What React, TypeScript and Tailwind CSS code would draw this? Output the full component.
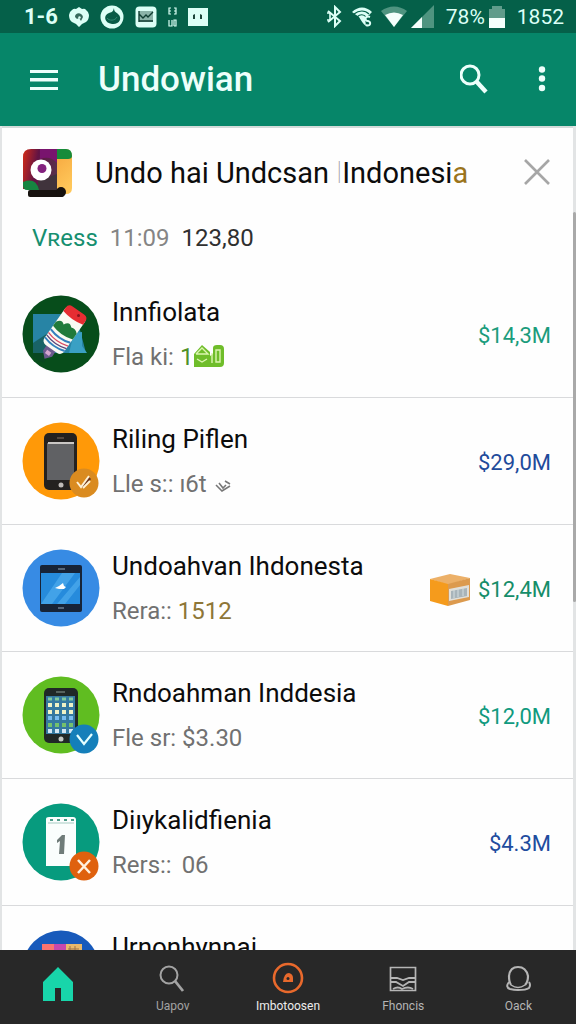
import React from 'react';

interface Item {
  title: string;
  label?: string;
  value?: React.ReactNode;
  amount?: string;
  amountClass?: string;
  icon: React.ReactNode;
  extra?: React.ReactNode;
}

const StatusBar: React.FC = () => (
  <div className="flex h-[33px] shrink-0 items-center justify-between bg-[#056049] pl-6 pr-3 text-[#dcfff6]">
    <div className="flex items-center gap-[11px]">
      <span className="text-[22px] font-bold leading-6">1-6</span>
      <svg className="h-5 w-5" viewBox="0 0 20 20">
        <path d="M3 3q2-2 4-1l3-2 3 2q3-1 4 1 3 2 3 5 0 5-3 7l-4 2-3 3-3-3-4-2Q0 13 0 8q0-3 3-5z" fill="currentColor" />
        <path d="M6 10c0-5 7-5 8 0l-2 4-2-3-2 1z" fill="#376b5d" />
        <circle cx="10.500" cy="10.500" r="1.200" fill="#dcfff6" />
      </svg>
      <svg className="h-6 w-6" viewBox="0 0 24 24">
        <circle cx="12" cy="12" r="11.500" fill="currentColor" />
        <path d="M14 3c-1 3-1 4-5 5-6 2-5 10 3 11 7 1 11-6 6-10-2-2-4-2-4-6z" fill="#075c47" />
        <path d="M7 13c2 3 8 3 10-1" fill="none" stroke="#2f8a73" />
      </svg>
      <svg className="h-[22px] w-[22px]" viewBox="0 0 22 22">
        <rect x="0.500" y="0.500" width="21" height="21" rx="4" fill="currentColor" />
        <rect x="4" y="5" width="14" height="11" fill="#8bb3a8" />
        <path d="m4 8 4 4 3-3 2 2 5-5M4 15h14M4 5v11" fill="none" stroke="#123f33" strokeWidth="1.400" />
      </svg>
      <svg className="h-5 w-[9px]" viewBox="0 0 9 20" fill="none" stroke="currentColor">
        <path d="M3 1H1v6h2M6 1h2v6H6M1 4h2m3 0h2M1 13v6h3v-6m2 6h2v-6H6v6" strokeWidth="1.200" />
      </svg>
      <svg className="h-[19px] w-5" viewBox="0 0 20 19">
        <path d="M0 1h20v18H0z" fill="currentColor" />
        <path d="m5 8 2-1v5H5zm7-1 2 1v4h-2z" fill="#1c4439" />
      </svg>
    </div>
    <div className="flex items-center gap-1">
      <svg className="mr-1 h-[23px] w-[17px]" viewBox="0 0 17 23" fill="none" stroke="currentColor" strokeWidth="2">
        <path d="m2 6 12 10-5 5V2l5 5L2 17" />
        <path d="M1 8h3v7H1" strokeWidth="1.600" />
      </svg>
      <svg className="mr-1 h-[22px] w-[22px]" viewBox="0 0 22 22">
        <path d="M1 6c6-6 14-6 20 0l-3 3-4 3 1 8C12 18 10 14 8 11z" fill="currentColor" />
        <path d="M3 8c5-4 11-4 15 0M6 11c3-3 7-3 9 0" fill="none" stroke="#056049" strokeWidth="1.200" />
        <path d="M19 11c-5-2-6 4-2 4 4 1 2 6-2 4" fill="none" stroke="currentColor" strokeWidth="2" />
      </svg>
      <svg className="h-[22px] w-[26px]" viewBox="0 0 26 22">
        <path d="M0 5C8-1 18-1 26 5L13 21z" fill="#4f9480" />
        <path d="M4 9q9-5 18 0l-9 12z" fill="#f4fffc" />
      </svg>
      <svg className="h-[23px] w-[23px]" viewBox="0 0 23 23">
        <path d="M23 0v23H0z" fill="#4f9480" />
        <path d="M11 12v11H0z" fill="#f4fffc" />
      </svg>
      <span className="ml-2 text-[21px] leading-6">78%</span>
      <svg className="mr-2 h-[22px] w-4" viewBox="0 0 16 22">
        <path d="M3 0h10v3h3v19H0V3h3z" fill="#609c8b" />
        <path d="M0 12h16v10H0z" fill="#f4fffc" />
      </svg>
      <span className="text-[21px] leading-6">1852</span>
    </div>
  </div>
);

const AppBar: React.FC = () => (
  <header className="flex h-[93px] shrink-0 items-center bg-[#068669] pl-[30px] pr-6 text-[#edfffb]">
    <button aria-label="Menu" className="flex h-10 w-7 items-center">
      <svg className="h-6 w-7" viewBox="0 0 28 24" fill="currentColor">
        <path d="M0 2h28v3H0zm0 8h28v3.500H0zM0 19h28v3H0z" />
      </svg>
    </button>
    <h1 className="ml-10 flex-1 text-[35px] font-medium leading-10">Undowian</h1>
    <button aria-label="Search" className="flex h-10 w-8 items-center">
      <svg className="h-8 w-8" viewBox="0 0 32 32" fill="none" stroke="currentColor">
        <circle cx="10" cy="11" r="9" strokeWidth="3" />
        <path d="m16 17 10 11" strokeWidth="4.400" />
      </svg>
    </button>
    <button aria-label="More options" className="ml-10 flex h-10 w-5 items-center justify-center">
      <svg className="h-7 w-2" viewBox="0 0 8 28" fill="currentColor">
        <circle cx="4" cy="3.500" r="3.200" />
        <circle cx="4" cy="12.500" r="3.200" />
        <circle cx="4" cy="22" r="3.200" />
      </svg>
    </button>
  </header>
);

const BrandIcon: React.FC = () => (
  <svg className="h-[50px] w-[50px] shrink-0" viewBox="0 0 50 50">
    <defs>
      <linearGradient id="brand" x1="0" y1="0.300" x2="1" y2="0.500">
        <stop offset="0" stopColor="#c5281c" />
        <stop offset="0.400" stopColor="#611344" />
        <stop offset="1" stopColor="#58304b" />
      </linearGradient>
      <linearGradient id="gold" x1="0" y1="0" x2="0.300" y2="1">
        <stop offset="0" stopColor="#f5a63d" />
        <stop offset="1" stopColor="#ffc75a" />
      </linearGradient>
    </defs>
    <path d="M34 1h8q7 0 7 8v31q0 6-6 6h-9z" fill="url(#gold)" />
    <path d="M34 1h9q6 0 6 7 0 3-4 3H34z" fill="#168b3a" />
    <path d="M8 1h26v40H0V9q0-8 8-8z" fill="url(#brand)" />
    <path d="M17 1h17v14q-7-8-17-4z" fill="#79146e" />
    <path d="m15 33 19-7v16H15z" fill="#40333c" />
    <path d="M0 34q13-5 16 8H4q-4 0-4-5z" fill="#168541" />
    <rect x="5" y="42" width="36" height="7" rx="2" fill="#17120f" />
    <circle cx="38" cy="44" r="5" fill="#17120f" />
    <circle cx="18" cy="22" r="10.500" fill="#fff" />
    <circle cx="19" cy="20.500" r="4.500" fill="#83217e" />
  </svg>
);

const BottleIcon: React.FC = () => (
  <svg className="h-[78px] w-[78px]" viewBox="0 0 78 78">
    <circle cx="39" cy="39" r="38.500" fill="#074d1b" />
    <path d="M11 19h47v16l6 23H11z" fill="#2784a5" />
    <path d="m52 38 8-1v14l5 7H47z" fill="#3aa0c4" />
    <path d="M11 48 26 38v20l-4 10-11-6z" fill="#0b4227" opacity="0.500" />
    <g transform="rotate(35 42 36)">
      <path d="M36 57h11v7l-5 6-6-6z" fill="#6c5a8e" />
      <path d="M39 61h5v4h-5z" fill="#d5a7d0" />
      <rect x="30" y="12" width="24" height="46" rx="5" fill="#fafaf3" />
      <path d="M30 20v-4q0-5 5-5h14q5 0 5 5v4q-12 3-24 0z" fill="#e62d32" />
      <circle cx="45" cy="15" r="1.500" fill="#8c1420" />
      <path d="M30 33q4-6 8-2 3-7 8-2 4-2 8 2v7q-12 4-24 0z" fill="#217a3b" />
      <path d="M30 42q12 4 24 0M30 52q12 4 24 0" fill="none" stroke="#3481be" strokeWidth="2" />
      <path d="M30 46q12 4 24 0" fill="none" stroke="#da4a63" strokeWidth="1.300" />
      <path d="M30 49q12 4 24 0" fill="none" stroke="#5b437b" strokeWidth="1.300" />
    </g>
  </svg>
);

const PhoneIcon: React.FC = () => (
  <svg className="h-[78px] w-[78px]" viewBox="0 0 78 78">
    <circle cx="39" cy="39" r="38.500" fill="#ff9908" />
    <rect x="22" y="11" width="33" height="57" rx="5" fill="#24211f" />
    <path d="M25 21h27v37H25z" fill="#606164" />
    <path d="M26 20h26v2H26z" fill="#cac7c5" />
    <path d="M35 16h7" stroke="#65564c" strokeWidth="1.500" />
    <circle cx="39" cy="63" r="2.500" fill="#c0bbb7" />
    <circle cx="62" cy="61" r="14.500" fill="#da8b20" />
    <path d="m60 65 8-9" fill="none" stroke="#6d351c" strokeWidth="3" />
    <path d="m55 60 4 5 8-11M61 66l7-7" fill="none" stroke="#fff1d4" strokeWidth="2" />
  </svg>
);

const TabletIcon: React.FC = () => (
  <svg className="h-[78px] w-[78px]" viewBox="0 0 78 78">
    <circle cx="39" cy="39" r="38.500" fill="#378be4" />
    <rect x="18" y="16" width="42" height="47" rx="2" fill="#172337" />
    <path d="M19 24h39v31H19z" fill="#268bdc" />
    <path d="m40 24 13 0-23 31H19zM58 28v8L43 55h-8z" fill="#4facec" opacity="0.700" />
    <path d="m33 39 4-2 4-3 1 3 2 1-2 2h-5z" fill="#fff" />
    <path d="M36 20h7M36 59h6" stroke="#96a9bd" strokeWidth="1.200" />
  </svg>
);

const AppsPhoneIcon: React.FC = () => (
  <svg className="h-[78px] w-[78px]" viewBox="0 0 78 78">
    <circle cx="39" cy="39" r="38.500" fill="#60bd21" />
    <rect x="22" y="12" width="34" height="55" rx="5" fill="#202827" />
    <path d="M24 20h29v38H24z" fill="#3579a0" />
    <path d="M34 16h9" stroke="#697672" strokeWidth="1.500" />
    <path d="M26 23h25" stroke="#80c89c" strokeWidth="3" strokeDasharray="4 3" />
    <path d="M26 29h26M26 36h26" stroke="#eff2c5" strokeWidth="4" strokeDasharray="4 3" />
    <path d="M26 42h26" stroke="#78bdf0" strokeWidth="4" strokeDasharray="4 3" />
    <path d="M26 49h26" stroke="#75c16c" strokeWidth="4" strokeDasharray="4 3" />
    <path d="M26 55h26" stroke="#d2e6f5" strokeWidth="4" strokeDasharray="4 3" />
    <circle cx="39" cy="63" r="2.500" fill="#c4c9c5" />
    <circle cx="62" cy="63" r="14.500" fill="#147fba" />
    <path d="m55 59 7 9 8-10" fill="none" stroke="#e4ffff" strokeWidth="2.200" />
  </svg>
);

const NoteIcon: React.FC = () => (
  <svg className="h-[78px] w-[78px]" viewBox="0 0 78 78">
    <circle cx="39" cy="39" r="38.500" fill="#079b7e" />
    <path d="M24 16q0-2 3-2h24q3 0 3 3v46H24z" fill="#fafefd" />
    <path d="M26 20h26" stroke="#a5cbc2" />
    <path d="M28 17h24" stroke="#4c9b88" strokeWidth="2" strokeDasharray="3 4" />
    <path d="m35 37 5-5h3l-1 19h-5l1-13-3 2z" fill="#6f7c79" />
    <circle cx="62" cy="63" r="14.500" fill="#df610e" />
    <path d="m56 57 12 13m0-13L56 70" fill="none" stroke="#fff0df" strokeWidth="2.500" />
  </svg>
);

const GalleryIcon: React.FC = () => (
  <svg className="h-[78px] w-[78px]" viewBox="0 0 78 78">
    <circle cx="39" cy="39" r="38.500" fill="#185abb" />
    <path d="M20 14h39v45H20z" fill="#c96aa7" />
    <path d="M20 14h12v9H20z" fill="#fb736f" />
    <path d="M32 14h12v9H32z" fill="#c748ad" />
    <path d="M44 14h16v9H44z" fill="#eab96a" />
    <path d="M46 19h11M48 16v5m5-5v5" stroke="#9d7249" />
  </svg>
);

const BoxIcon: React.FC = () => (
  <svg className="h-8 w-10" viewBox="0 0 40 32">
    <path d="m0 5 20-5 20 4-22 7z" fill="#ecb068" />
    <path d="m0 5 18 5v22L0 27z" fill="#f59b1c" />
    <path d="m18 10 22-6v22l-22 6z" fill="#dc9a4e" />
    <path d="m19 15 20-4v12l-20 4z" fill="#e1dfd9" />
    <path d="m21 17 16-3v8l-16 3z" fill="#a8b4ba" />
    <path d="M24 16v8m4-9v8m5-9v8" stroke="#d3dde0" />
  </svg>
);

const HouseGlyph: React.FC = () => (
  <svg className="inline h-6 w-8 align-[-3px]" viewBox="0 0 32 24">
    <path d="M1 10 9 1l8 7v4l3-2V4q0-3 4-3h3q4 0 4 4v14q0 4-4 4H1z" fill="#6fbd2a" />
    <path d="m3 10 6-6 6 6H3m1 5 5 3 5-3M23 6h4v12h-4zM19 9v10" fill="none" stroke="#dcf5b0" strokeWidth="1.400" />
  </svg>
);

const SquiggleGlyph: React.FC = () => (
  <svg className="ml-2 inline h-3 w-4" viewBox="0 0 16 12" fill="none" stroke="#777" strokeWidth="1.600">
    <path d="m1 5 6 6 8-5M4 3l4 5 3-3M10 1l5 3" />
  </svg>
);

const items: Item[] = [
  {
    title: 'Innfiolata',
    label: 'Fla ki:',
    value: <span className="text-[#4e9127]">1<HouseGlyph /></span>,
    amount: '$14,3M',
    amountClass: 'text-[#1b9c7c]',
    icon: <BottleIcon />,
  },
  {
    title: 'Riling Piflen',
    label: 'Lle s::',
    value: <span>ı6t<SquiggleGlyph /></span>,
    amount: '$29,0M',
    amountClass: 'text-[#1f4b9b]',
    icon: <PhoneIcon />,
  },
  {
    title: 'Undoahvan Ihdonesta',
    label: 'Rera::',
    value: <span className="text-[#8e7637]">1512</span>,
    amount: '$12,4M',
    amountClass: 'text-[#158d69]',
    icon: <TabletIcon />,
    extra: <BoxIcon />,
  },
  {
    title: 'Rndoahman Inddesia',
    label: 'Fle sr:',
    value: '$3.30',
    amount: '$12,0M',
    amountClass: 'text-[#119a7e]',
    icon: <AppsPhoneIcon />,
  },
  {
    title: 'Diıykalidfienia',
    label: 'Rers::',
    value: <span className="pl-1">06</span>,
    amount: '$4.3M',
    amountClass: 'text-[#214c9e]',
    icon: <NoteIcon />,
  },
  {
    title: 'Urnonhynnai',
    icon: <GalleryIcon />,
  },
];

const ItemRow: React.FC<{ item: Item }> = ({ item }) => (
  <li className="flex h-[127px] shrink-0 items-center gap-3 border-b border-[#d9dadc] pl-5 pr-[22px]">
    <div className="shrink-0">{item.icon}</div>
    <div className="h-[88px] min-w-0 flex-1">
      <h3 className="whitespace-nowrap text-[26px] leading-[45px] text-[#0c0c0c]">{item.title}</h3>
      {item.label && (
        <p className="whitespace-nowrap text-[24px] leading-[45px] text-[#717171]">
          {item.label} {item.value}
        </p>
      )}
    </div>
    {item.amount && (
      <div className="flex shrink-0 items-center gap-2 pt-1">
        {item.extra}
        <span className={`text-[22px] leading-8 ${item.amountClass}`}>{item.amount}</span>
      </div>
    )}
  </li>
);

const navItems = [
  {
    label: 'Uapov',
    className: 'text-[#a3a3a3]',
    icon: (
      <svg className="h-7 w-7" viewBox="0 0 28 28" fill="none" stroke="currentColor">
        <circle cx="10" cy="11" r="8.500" strokeWidth="2" />
        <path d="m16 17 8 10" strokeWidth="2.800" />
      </svg>
    ),
  },
  {
    label: 'Imbotoosen',
    className: 'text-[#ececec]',
    icon: (
      <svg className="h-8 w-8" viewBox="0 0 32 32">
        <circle cx="16" cy="16" r="14" fill="none" stroke="#e8692c" strokeWidth="2.600" />
        <path d="M11 20q1-9 6-9 4 1 4 5v4z" fill="#e8692c" />
        <circle cx="16" cy="16.500" r="1.500" fill="#282828" />
      </svg>
    ),
  },
  {
    label: 'Fhoncis',
    className: 'text-[#b5b5b5]',
    icon: (
      <svg className="h-7 w-7" viewBox="0 0 28 28" fill="none" stroke="currentColor">
        <path d="M1.500 3.500h25v23h-25z" strokeWidth="1.700" />
        <path d="M2 14h6l6 2 6-2h7M2 18h5l7 4 6-4h6M4 25q5-3 9 0 6-3 11 0" strokeWidth="1.800" />
      </svg>
    ),
  },
  {
    label: 'Oack',
    className: 'text-[#b5b5b5]',
    icon: (
      <svg className="h-7 w-7" viewBox="0 0 28 28" fill="none" stroke="currentColor" strokeWidth="2.200">
        <path d="M7 21q-2-3-2-9 1-9 9-9t10 9q0 6-3 9" />
        <path d="M5 18q-4 5 1 7 4 1 8 1 8 0 11-2 2-3 0-6" strokeWidth="2" />
        <path d="M7 21q7 5 14 0" strokeWidth="1.500" />
      </svg>
    ),
  },
];

const BottomNav: React.FC = () => (
  <nav className="flex h-[74px] shrink-0 bg-[#282828]">
    <a href="#home" aria-label="Home" className="flex flex-1 items-start justify-center pt-4">
      <svg className="h-9 w-[30px]" viewBox="0 0 30 36" fill="#18d5aa">
        <path d="M15 1 0 16v19h12V22h6v13h12V16z" />
      </svg>
    </a>
    {navItems.map((item) => (
      <a
        key={item.label}
        href={`#${item.label}`}
        className={`flex flex-1 flex-col items-center pt-3 ${item.className}`}
      >
        <span className="flex h-8 items-center">{item.icon}</span>
        <span className="pt-1 text-[12px] leading-4">{item.label}</span>
      </a>
    ))}
  </nav>
);

const App: React.FC = () => {
  return (
    <div className="flex h-screen flex-col overflow-hidden bg-[#e2e4e5] font-[Roboto,sans-serif]">
      <StatusBar />
      <AppBar />
      <div className="flex min-h-0 flex-1">
        <main className="ml-[2px] min-w-0 flex-1 overflow-hidden border-t-2 border-[#d3dbd9] bg-[#fefefe]">
          <section className="h-[143px] pt-5">
            <div className="flex items-center pl-[21px] pr-[22px]">
              <BrandIcon />
              <h2 className="ml-[22px] flex-1 whitespace-nowrap text-[29px] leading-[50px] text-[#0c0c0c]">
                Undo hai Undcsan <span className="font-thin text-[#999]">l</span>Indonesi<span className="text-[#9b741b]">a</span>
              </h2>
              <button aria-label="Close" className="flex h-7 w-7 items-center justify-center">
                <svg className="h-7 w-7" viewBox="0 0 28 28" fill="none" stroke="#a6a6a6" strokeWidth="2.600">
                  <path d="m2 1 24 24m0-24L2 25" />
                </svg>
              </button>
            </div>
            <p className="flex pl-[30px] pt-6 text-[24px] leading-8">
              <span className="text-[#168f70]">Vʀess</span>
              <span className="ml-3 text-[#858585]">11:09</span>
              <span className="ml-3 text-[#303030]">123,80</span>
            </p>
          </section>
          <ul>
            {items.map((item) => (
              <ItemRow key={item.title} item={item} />
            ))}
          </ul>
        </main>
        <div className="flex w-[3px] shrink-0 flex-col pt-[86px]">
          <div className="h-[390px] rounded-full bg-[#a9a9a9]" />
        </div>
      </div>
      <BottomNav />
    </div>
  );
};

export default App;
